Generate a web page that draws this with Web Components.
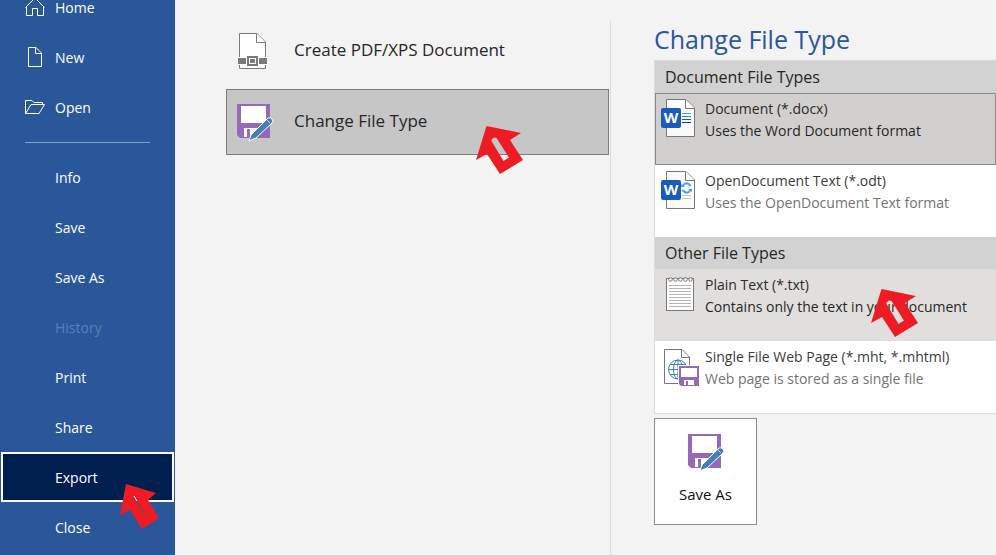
<!DOCTYPE html>
<html lang="en">
<head>
<meta charset="utf-8">
<title>Export</title>
<style>
html, body { margin: 0; height: 100%; }
body { font-family: "Open Sans", "Noto Sans", sans-serif; font-size: 14px; background: #f3f3f3; color: #262626; overflow: hidden; }
</style>
</head>
<body>
<backstage-view>
  <side-nav slot="nav">
    <nav-item icon="home">Home</nav-item>
    <nav-item icon="new">New</nav-item>
    <nav-item icon="open">Open</nav-item>
    <nav-divider></nav-divider>
    <nav-item>Info</nav-item>
    <nav-item>Save</nav-item>
    <nav-item>Save As</nav-item>
    <nav-item disabled>History</nav-item>
    <nav-item>Print</nav-item>
    <nav-item>Share</nav-item>
    <nav-item current>Export<pointer-arrow slot="mark" kind="slim"></pointer-arrow></nav-item>
    <nav-item>Close</nav-item>
  </side-nav>
  <export-option slot="options" icon="pdf">Create PDF/XPS Document</export-option>
  <export-option slot="options" icon="savepen" selected>Change File Type<pointer-arrow slot="mark"></pointer-arrow></export-option>
  <file-types slot="detail" heading="Change File Type">
    <type-group label="Document File Types">
      <type-row icon="docx" selected label="Document (*.docx)">Uses the Word Document format</type-row>
      <type-row icon="odt" label="OpenDocument Text (*.odt)">Uses the OpenDocument Text format</type-row>
    </type-group>
    <type-group label="Other File Types">
      <type-row icon="txt" hovered label="Plain Text (*.txt)">Contains only the text in your document<pointer-arrow slot="mark"></pointer-arrow></type-row>
      <type-row icon="mht" label="Single File Web Page (*.mht, *.mhtml)">Web page is stored as a single file</type-row>
    </type-group>
    <save-button slot="action">Save As</save-button>
  </file-types>
</backstage-view>

<script>
const wordPage = `<path d="M10.500 1.500H30L38.500 10V38.500H10.500Z" fill="#fafafa" stroke="#797774"/><path d="M29.500 1.500V10.500H38.500" fill="#fff" stroke="#797774"/>`;
const wordTile = `<rect x="5" y="10" width="20" height="20" rx="2" fill="#185abd"/><text x="15" y="25" text-anchor="middle" font-family="Open Sans, sans-serif" font-weight="700" font-size="15" fill="#fff">W</text>`;
const ICONS = {
  home: [20, 20, `<path d="M.5 10.500 10 1l9.500 9.500M1.500 9V18.500H7.500V11.500H12.500V18.500H18.500V9" fill="none" stroke="#fff"/>`],
  new: [20, 22, `<path d="M3.500 1.500H11L16.500 7V20.500H3.500ZM10.500 1.500V7.500H16.500" fill="none" stroke="#fff"/>`],
  open: [20, 16, `<path d="M.5 14.500V1.500H7L9 3.500H17.500V5.500M.5 14.500 6 5.500H19.500L14 14.500Z" fill="none" stroke="#fff"/>`],
  pdf: [36, 38, `<path d="M2.500 1.500H20L28.500 10V36.500H2.500Z" fill="#fff" stroke="#7a7a7a"/><path d="M19.500 1.500V10.500H28.500" fill="#fff" stroke="#7a7a7a"/><path d="M1 25H30V33H1Z" fill="#fff"/><path d="M1 26H9V32H1ZM22 26H30V32H22Z" fill="#7a7a7a"/><rect x="11" y="25" width="9" height="8" fill="#fff" stroke="#7a7a7a" stroke-width="2"/><rect x="13" y="27" width="5" height="4" fill="#7a7a7a"/>`],
  savepen: [36, 38, `<path d="M0 1H33V35H3L0 32Z" fill="#9668b8"/><path d="M4 3H29V20H4ZM7 25H21V34H7Z" fill="#fff"/><path d="M10 26H13V34H10Z" fill="#9668b8"/><path d="M12 38 14 32 31 15Q33 14 35 16T35 20L19 35Z" fill="#4480b8" stroke="#fff"/><path d="M30 17 33 20" stroke="#b8d2e8"/>`],
  docx: [40, 40, wordPage + `<path d="M26 15.500H35" stroke="#41a5ee"/><path d="M26 18.500H35" stroke="#2b7cd3"/><path d="M26 21.500H35" stroke="#185abd"/><path d="M26 24.500H35" stroke="#103f91"/>` + wordTile],
  odt: [40, 40, wordPage + `<path d="M26.500 16Q31 10.500 34.500 16M26.500 20Q31 25.500 34.500 20" fill="none" stroke="#41a5ee" stroke-width="2"/><path d="M25 14V17H29ZM36 22V19H32Z" fill="#41a5ee"/><path d="M26 25.500H35M26 28.500H35" stroke="#c4c4c4"/>` + wordTile],
  txt: [40, 40, `<rect x="10.500" y="4.500" width="27" height="32" fill="#fff" stroke="#777"/><path d="M13 11.500H35M13 14.500H35M13 17.500H35M13 20.500H35M13 23.500H35M13 26.500H35M13 29.500H35M13 32.500H35" stroke="#b5b5b5"/><g fill="#fff" stroke="#777"><circle cx="14.500" cy="5.500" r="1.800"/><circle cx="19.500" cy="5.500" r="1.800"/><circle cx="24.500" cy="5.500" r="1.800"/><circle cx="29.500" cy="5.500" r="1.800"/><circle cx="34.500" cy="5.500" r="1.800"/></g>`],
  mht: [44, 40, `<path d="M8.500 3.500H26L33.500 11V37.500H8.500Z" fill="#fff" stroke="#777"/><path d="M25.500 3.500V11.500H33.500" fill="none" stroke="#777"/><g fill="none" stroke="#3d7fc0"><circle cx="22" cy="23.500" r="9.500" fill="#fff"/><ellipse cx="22" cy="23.500" rx="4.500" ry="9.500"/><path d="M22 14V33M12.500 23.500H31M14 18.500H30M14 28.500H30"/></g><path d="M22 19H44V41H22Z" fill="#fff"/><path d="M23 20H43V40H25L23 38Z" fill="#9668b8"/><path d="M25 22H41V31H25ZM28 34H38V40H28Z" fill="#fff"/><path d="M30 35H32V39H30ZM28 39H38V40H28Z" fill="#9668b8"/>`]
};
const icon = n => { const i = ICONS[n]; return i ? `<svg width="${i[0]}" height="${i[1]}" viewBox="0 0 ${i[0]} ${i[1]}" overflow="visible" aria-hidden="true">${i[2]}</svg>` : ""; };

class Base extends HTMLElement {
  connectedCallback() {
    if (this.shadowRoot) return;
    this.attachShadow({ mode: "open" }).innerHTML = `<style>*{box-sizing:border-box}:host{display:block;box-sizing:border-box}button{font:inherit;color:inherit;cursor:pointer;margin:0}svg{display:block;flex:none}${this.css()}</style>${this.html()}`;
  }
}
const define = (name, css, html) => customElements.define(name, class extends Base {
  css() { return css; }
  html() { return html(this); }
});

define("backstage-view", `
  :host{display:grid;grid-template-columns:175px 436px minmax(0,1fr);height:100vh;overflow:hidden}
  .options{padding:18px 2px 0 51px;display:flex;flex-direction:column;gap:5px;background:linear-gradient(#dcdcdc,#dcdcdc) right 20px/1px 100% no-repeat}
  .detail{padding:20px 0 0 43px}`,
  () => `<slot name="nav"></slot><main class="options"><slot name="options"></slot></main><section class="detail"><slot name="detail"></slot></section>`);

define("side-nav", `:host{background:#2a579a;color:#fff;overflow:hidden}nav{margin-top:-18px}`,
  () => `<nav aria-label="File"><slot></slot></nav>`);

define("nav-divider", `:host{height:20px;padding:10px 25px 0}hr{margin:0;border:0;border-top:1px solid #7ba3c8}`, () => `<hr>`);

define("nav-item", `
  :host{position:relative}
  a{display:flex;align-items:center;height:50px;padding:0 25px;color:inherit;text-decoration:none}
  .i{width:30px;flex:none}
  :host([disabled]) a{color:#5b80b7}
  :host([current]) a{background:#001e4e;border:2px solid #fff;margin:0 1px;padding:0 22px}
  ::slotted(pointer-arrow){position:absolute;left:120px;top:32px;z-index:2}`,
  e => `<a href="#" ${e.hasAttribute("current") ? 'aria-current="page"' : ""} ${e.hasAttribute("disabled") ? 'aria-disabled="true"' : ""}><span class="i">${icon(e.getAttribute("icon"))}</span><span><slot></slot></span></a><slot name="mark"></slot>`);

define("export-option", `
  :host{position:relative}
  button{width:100%;height:66px;border:1px solid transparent;background:none;padding:0 10px;display:flex;align-items:center;gap:21px;text-align:left;font-size:17px;line-height:24px}
  .t{padding-bottom:2px}
  :host([selected]) button{background:#c6c6c6;border-color:#7d7d7d}
  ::slotted(pointer-arrow){position:absolute;left:250px;top:37px}`,
  e => `<button type="button" aria-pressed="${e.hasAttribute("selected")}">${icon(e.getAttribute("icon"))}<span class="t"><slot></slot></span></button><slot name="mark"></slot>`);

define("file-types", `
  h1{margin:0;font-weight:400;font-size:25px;line-height:38px;color:#2a579a;padding-bottom:2px}
  .list{border:1px solid #dcdcdc;border-right:0;background:#fff}
  .action{padding-top:4px}`,
  e => `<h1>${e.getAttribute("heading")}</h1><div class="list"><slot></slot></div><div class="action"><slot name="action"></slot></div>`);

define("type-group", `h2{margin:0;height:32px;line-height:32px;padding-left:10px;background:#d2d2d2;font-size:16px;font-weight:400}`,
  e => `<h2>${e.getAttribute("label")}</h2><slot></slot>`);

define("type-row", `
  :host{position:relative}
  button{width:100%;height:72px;border:1px solid transparent;background:#fff;padding:4px 0 0;display:flex;align-items:flex-start;text-align:left;line-height:22px;color:#737373}
  .i{width:49px;flex:none}
  b{display:block;font-weight:400;color:#3b3b3b}
  :host([selected]) button{background:#d2d0ce;border-color:#8a8886;color:#262626}
  :host([hovered]) button{background:#e1dfdd;color:#262626}
  :host([selected]) b,:host([hovered]) b{color:#2b2b2b}
  ::slotted(pointer-arrow){position:absolute;left:216px;top:20px}`,
  e => `<button type="button"><span class="i">${icon(e.getAttribute("icon"))}</span><span><b>${e.getAttribute("label")}</b><slot></slot></span></button><slot name="mark"></slot>`);

define("save-button", `button{width:103px;height:107px;border:1px solid #8f8f8f;background:#fff;display:flex;flex-direction:column;align-items:center;padding:14px 0 0;gap:13px;font-size:15px;line-height:20px;color:#111}`,
  () => `<button type="button">${icon("savepen")}<span><slot></slot></span></button>`);

define("pointer-arrow", `:host{pointer-events:none}`, e => e.getAttribute("kind") === "slim"
  ? `<svg width="40" height="46" aria-hidden="true"><path d="M6 0 36 9 28 16 39 34 22 45 10 26 0 31Z" fill="#ed1c24"/><path d="M14 13 25 31" stroke="#2a579a"/><path d="M14 12 17 17" stroke="#fff"/></svg>`
  : `<svg width="48" height="49" aria-hidden="true"><path fill-rule="evenodd" d="M10.500 0 45 7 34 14 47 34 24 48 11 28 0 34ZM15.500 15V13.500L18 11.500 20.500 12 33 31.500 27.500 35Z" fill="#ed1c24"/></svg>`);
</script>
</body>
</html>
